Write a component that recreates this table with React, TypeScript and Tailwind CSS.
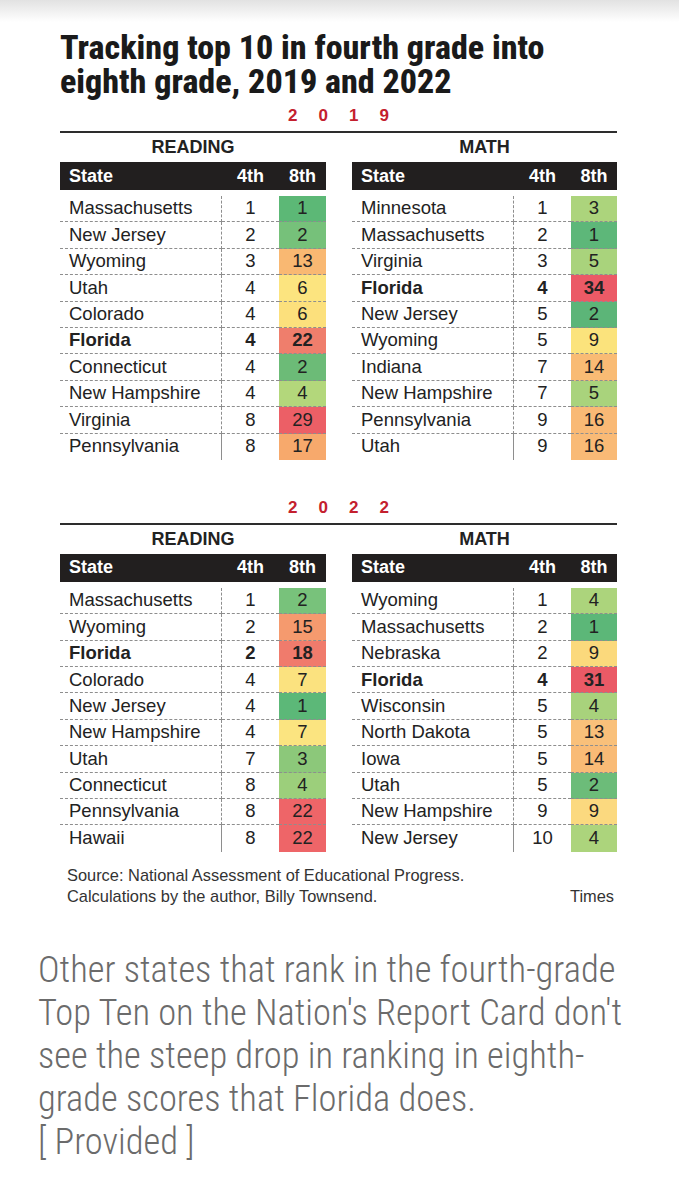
type Row = [string, number, number, string]

const reading2019: Row[] = [
  ["Massachusetts", 1, 1, "#5cb876"],
  ["New Jersey", 2, 2, "#76c17a"],
  ["Wyoming", 3, 13, "#f9b872"],
  ["Utah", 4, 6, "#fce47f"],
  ["Colorado", 4, 6, "#fce07c"],
  ["Florida", 4, 22, "#ef7e6c"],
  ["Connecticut", 4, 2, "#6cbb77"],
  ["New Hampshire", 4, 4, "#b3d77b"],
  ["Virginia", 8, 29, "#ec5f66"],
  ["Pennsylvania", 8, 17, "#f7a96c"],
]

const math2019: Row[] = [
  ["Minnesota", 1, 3, "#acd47c"],
  ["Massachusetts", 2, 1, "#5db779"],
  ["Virginia", 3, 5, "#a9d37c"],
  ["Florida", 4, 34, "#eb5a66"],
  ["New Jersey", 5, 2, "#5cb578"],
  ["Wyoming", 5, 9, "#fbe37c"],
  ["Indiana", 7, 14, "#f9bb74"],
  ["New Hampshire", 7, 5, "#a9d37c"],
  ["Pennsylvania", 9, 16, "#f9b975"],
  ["Utah", 9, 16, "#f9ba76"],
]

const reading2022: Row[] = [
  ["Massachusetts", 1, 2, "#78c27b"],
  ["Wyoming", 2, 15, "#f59a6e"],
  ["Florida", 2, 18, "#f07b6c"],
  ["Colorado", 4, 7, "#fbe27f"],
  ["New Jersey", 4, 1, "#5cb878"],
  ["New Hampshire", 4, 7, "#fbe480"],
  ["Utah", 7, 3, "#8cc87a"],
  ["Connecticut", 8, 4, "#9ccf7b"],
  ["Pennsylvania", 8, 22, "#ee6568"],
  ["Hawaii", 8, 22, "#ee6568"],
]

const math2022: Row[] = [
  ["Wyoming", 1, 4, "#acd47c"],
  ["Massachusetts", 2, 1, "#5cb778"],
  ["Nebraska", 2, 9, "#fbd97c"],
  ["Florida", 4, 31, "#ea5a66"],
  ["Wisconsin", 5, 4, "#a8d27c"],
  ["North Dakota", 5, 13, "#f9c07a"],
  ["Iowa", 5, 14, "#f9bb76"],
  ["Utah", 5, 2, "#6cbc79"],
  ["New Hampshire", 9, 9, "#fbd97f"],
  ["New Jersey", 10, 4, "#acd47c"],
]

const RankTable = ({ rows, cols }: { rows: Row[]; cols: string }) => (
  <div>
    <div className={`grid ${cols} h-[28px] items-center bg-[#221f1f] text-white font-bold text-[18px]`}>
      <div className="pl-[9px]">State</div>
      <div className="text-center">4th</div>
      <div className="text-center">8th</div>
    </div>
    <div className="mt-[6px]">
      {rows.map(([state, fourth, eighth, color], i) => {
        const bold = state === "Florida"
        const last = i === rows.length - 1
        const line = last ? "" : "border-b border-dashed border-[#8e8e8e]"
        return (
          <div
            key={state + i}
            className={`grid ${cols} h-[26.4px] text-[18.5px] leading-none text-[#222] ${bold ? "font-bold" : ""}`}
          >
            <div className={`flex items-center pl-[9px] border-r-[1.5px] border-r-[#8e8e8e] ${line}`}>{state}</div>
            <div className={`flex items-center justify-center ${line}`}>{fourth}</div>
            <div className={`flex items-center justify-center ${line}`} style={{ backgroundColor: color }}>
              {eighth}
            </div>
          </div>
        )
      })}
    </div>
  </div>
)

const YearBlock = ({ year, reading, math }: { year: string; reading: Row[]; math: Row[] }) => (
  <div>
    <div className="flex justify-center gap-[21px] h-[20px] items-center text-[17px] font-bold text-[#c4202e]">
      {year.split("").map((d, i) => (
        <span key={i}>{d}</span>
      ))}
    </div>
    <div className="mt-[5px] h-[2px] bg-[#2d2d2d]" />
    <div className="grid grid-cols-[266px_265px] gap-x-[26px]">
      <div>
        <div className="h-[29px] flex items-center justify-center text-[18px] font-bold text-[#222]">READING</div>
        <RankTable rows={reading} cols="grid-cols-[162px_57px_47px]" />
      </div>
      <div>
        <div className="h-[29px] flex items-center justify-center text-[18px] font-bold text-[#222]">MATH</div>
        <RankTable rows={math} cols="grid-cols-[162px_57px_46px]" />
      </div>
    </div>
  </div>
)

export default function App() {
  return (
    <div className="w-[679px] min-h-[1200px] bg-white font-['Liberation_Sans',Arial,sans-serif]">
      <div className="h-[22px] bg-gradient-to-b from-[#e2e2e2] to-white" />
      <div className="pl-[60px] pr-[62px]">
        <h1 className="mt-[8px] text-[34px] leading-[34px] font-extrabold text-[#1a1a1a] font-['Roboto_Condensed','DejaVu_Sans_Condensed',sans-serif]">
          Tracking top 10 in fourth grade into
          <br />
          eighth grade, 2019 and 2022
        </h1>
        <div className="mt-[8px]">
          <YearBlock year="2019" reading={reading2019} math={math2019} />
        </div>
        <div className="mt-[38px]">
          <YearBlock year="2022" reading={reading2022} math={math2022} />
        </div>
        <div className="mt-[13px] pl-[7px] flex items-end justify-between text-[16.4px] leading-[21px] text-[#333]">
          <div>
            Source: National Assessment of Educational Progress.
            <br />
            Calculations by the author, Billy Townsend.
          </div>
          <div className="pr-[3px]">Times</div>
        </div>
      </div>
      <p className="mt-[41px] px-[38px] whitespace-nowrap text-[36.5px] leading-[43px] font-light text-[#6b6b6b] font-['Roboto_Condensed','DejaVu_Sans_Condensed',sans-serif]">
        Other states that rank in the fourth-grade
        <br />
        Top Ten on the Nation's Report Card don't
        <br />
        see the steep drop in ranking in eighth-
        <br />
        grade scores that Florida does.
        <br />[ Provided ]
      </p>
    </div>
  )
}
